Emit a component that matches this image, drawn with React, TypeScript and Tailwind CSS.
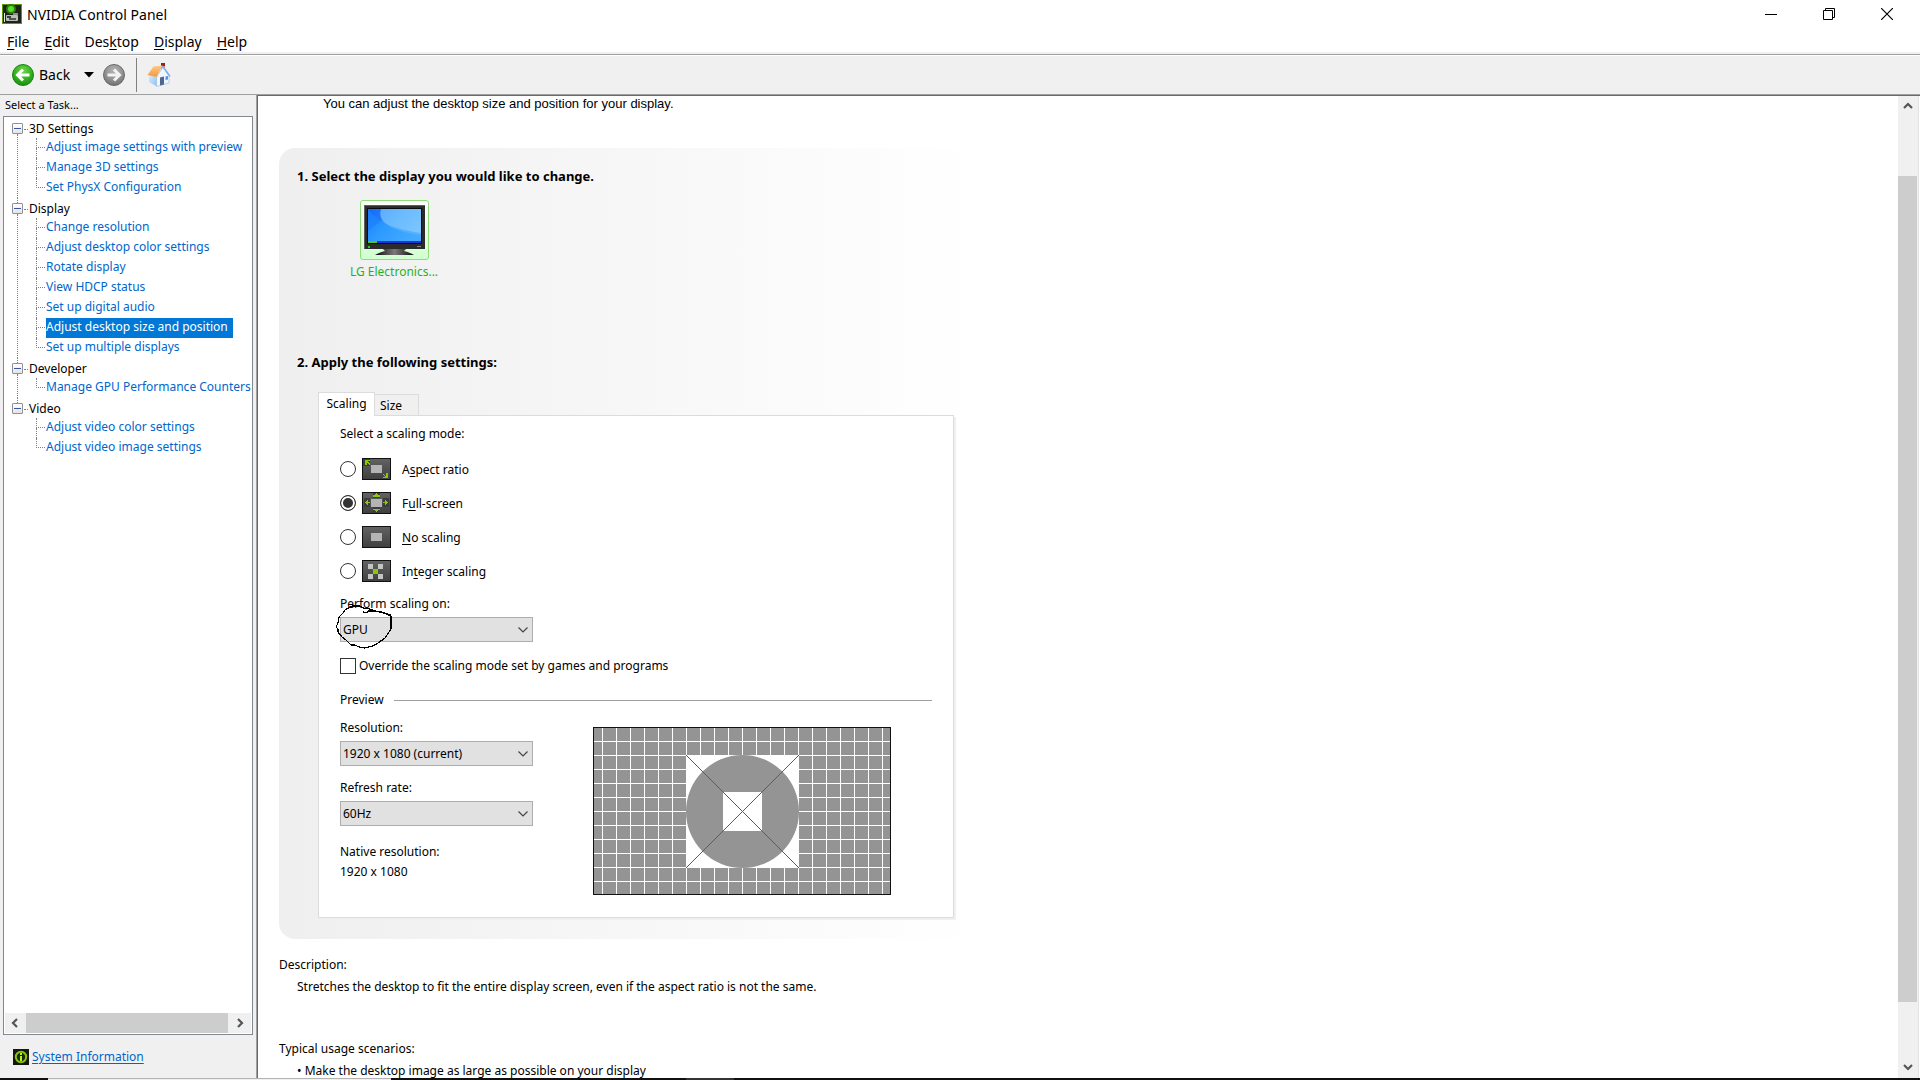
import type { ReactNode } from "react";
import clsx from "clsx";

const menus = [
  { pre: "", key: "F", post: "ile" },
  { pre: "", key: "E", post: "dit" },
  { pre: "Des", key: "k", post: "top" },
  { pre: "", key: "D", post: "isplay" },
  { pre: "", key: "H", post: "elp" },
];

const tree = [
  {
    label: "3D Settings",
    items: ["Adjust image settings with preview", "Manage 3D settings", "Set PhysX Configuration"],
  },
  {
    label: "Display",
    items: [
      "Change resolution",
      "Adjust desktop color settings",
      "Rotate display",
      "View HDCP status",
      "Set up digital audio",
      "Adjust desktop size and position",
      "Set up multiple displays",
    ],
  },
  { label: "Developer", items: ["Manage GPU Performance Counters"] },
  { label: "Video", items: ["Adjust video color settings", "Adjust video image settings"] },
];

const ACTIVE_TASK = "Adjust desktop size and position";

/* ---------- icons ---------- */

const AppIcon = () => (
  <svg width="20" height="20" viewBox="0 0 20 20" aria-hidden="true">
    <rect width="20" height="20" fill="#5f9a00" />
    <rect x="1" y="1" width="18" height="18" fill="#1d2416" />
    <circle cx="9" cy="5" r="5" fill="#2f7a12" />
    <circle cx="9" cy="5" r="3" fill="#55e02a" />
    <rect x="2" y="9" width="1" height="9" fill="#e4e6e4" />
    <rect x="4" y="11" width="12" height="6" rx="1" fill="#b9bdb9" />
    <rect x="5" y="12" width="4" height="2" fill="#3a3f38" />
    <rect x="7" y="14" width="7" height="2" fill="#555" />
    <rect x="11" y="9" width="5" height="2" fill="#8d918d" />
  </svg>
);

const NavArrow = ({ green }: { green?: boolean }) => (
  <svg width="22" height="22" viewBox="0 0 22 22" aria-hidden="true">
    <defs>
      <radialGradient id="navGreen" cx="0.5" cy="0.3" r="0.75">
        <stop offset="0" stopColor="#6fd84a" />
        <stop offset="0.6" stopColor="#2fae1c" />
        <stop offset="1" stopColor="#158a0c" />
      </radialGradient>
      <radialGradient id="navGray" cx="0.5" cy="0.3" r="0.75">
        <stop offset="0" stopColor="#b5b5b5" />
        <stop offset="0.6" stopColor="#8e8e8e" />
        <stop offset="1" stopColor="#6c6c6c" />
      </radialGradient>
    </defs>
    <circle
      cx="11"
      cy="11"
      r="10.5"
      fill={green ? "url(#navGreen)" : "url(#navGray)"}
      stroke={green ? "#1b8512" : "#6a6a6a"}
    />
    <path
      d={green ? "M17.5 11H6M11 5.5L5.5 11l5.5 5.5" : "M4.5 11H16M11 5.5l5.5 5.5-5.5 5.5"}
      fill="none"
      stroke={green ? "#fff" : "#f2f2f2"}
      strokeWidth="3"
    />
  </svg>
);

const HomeIcon = () => (
  <svg width="24" height="24" viewBox="0 0 24 24" aria-hidden="true">
    <defs>
      <linearGradient id="homeSide" x1="0" y1="0" x2="1" y2="1">
        <stop offset="0" stopColor="#d8ecff" />
        <stop offset="1" stopColor="#8fbcec" />
      </linearGradient>
      <linearGradient id="homeRoof" x1="0" y1="0" x2="0" y2="1">
        <stop offset="0" stopColor="#ffc888" />
        <stop offset="1" stopColor="#f49a3c" />
      </linearGradient>
    </defs>
    <rect x="14" y="1" width="4" height="7" fill="#d98a74" />
    <rect x="14" y="0" width="4" height="3" fill="#a01c14" />
    <path d="M2 12l8 2v9.500L2 19z" fill="url(#homeSide)" />
    <path d="M9.500 14L16 4l6 8.500v7.500l-12.500 3.500z" fill="#eef6ff" stroke="#9dbfe4" strokeWidth="0.7" />
    <path d="M.5 12L6.500 3.500 15.500 2.500 9.500 14z" fill="url(#homeRoof)" />
    <path d="M15.500 3l7.500 10.500" stroke="#7fb0e4" strokeWidth="1.600" />
    <path d="M13 14.500l4-1v8l-4 1z" fill="#4f6690" />
    <path d="M18.500 13.500l2.500-.6v3.600l-2.500.6z" fill="#5f8fe0" />
  </svg>
);

const Chevron = ({ d }: { d: string }) => (
  <svg width="10" height="10" viewBox="0 0 10 10" aria-hidden="true">
    <path d={d} fill="none" stroke="#555" strokeWidth="2.200" />
  </svg>
);

const InfoIcon = () => (
  <svg width="16" height="16" viewBox="0 0 16 16" aria-hidden="true">
    <rect width="16" height="16" fill="#14180f" />
    <circle cx="8" cy="8" r="5.200" fill="#1c2a08" stroke="#86c40c" strokeWidth="2" />
    <rect x="7" y="4" width="2" height="2" fill="#b6f02c" />
    <rect x="7" y="7" width="2" height="5" fill="#b6f02c" />
  </svg>
);

const MonitorIcon = () => (
  <svg width="61" height="51" viewBox="0 0 61 51" aria-hidden="true">
    <defs>
      <linearGradient id="screen" x1="0" y1="0" x2="1" y2="0.6">
        <stop offset="0" stopColor="#1672ff" />
        <stop offset="0.5" stopColor="#3aa0ff" />
        <stop offset="1" stopColor="#5cb8ff" />
      </linearGradient>
      <linearGradient id="stand" x1="0" y1="0" x2="1" y2="0">
        <stop offset="0" stopColor="#0a0a0a" />
        <stop offset="0.5" stopColor="#7a7a7a" />
        <stop offset="1" stopColor="#0a0a0a" />
      </linearGradient>
    </defs>
    <rect width="61" height="44" fill="#2b2b2b" />
    <path d="M0 0h61v1H1v43H0z" fill="#5e5e5e" />
    <rect x="3" y="3" width="55" height="36" fill="#0c0c0c" />
    <rect x="4" y="4" width="53" height="34" fill="url(#screen)" />
    <path d="M4 4h13c-1 4-1 8 1 11L4 26z" fill="#1560f5" opacity="0.4" />
    <path d="M17 4c-4 12 8 22 40 26V4z" fill="#9ad3ff" opacity="0.5" />
    <path d="M4 4c8 12 24 20 53 24v8H4z" fill="#1e96ff" opacity="0.4" />
    <rect x="4" y="36" width="53" height="2" fill="#1d35d8" />
    <rect x="4" y="36" width="9" height="2" fill="#57c51f" />
    <rect x="4" y="41" width="2" height="2" fill="#23d02a" />
    <rect x="53" y="41" width="4" height="1" fill="#888" />
    <path d="M19 44h23l-2 2c4 1 7 2 10 4H11c3-2 6-3 10-4z" fill="url(#stand)" />
  </svg>
);

const ModeIcon = ({ children }: { children?: ReactNode }) => (
  <svg width="29" height="22" viewBox="0 0 29 22" shapeRendering="crispEdges" aria-hidden="true">
    <defs>
      <linearGradient id="modeBg" x1="0" y1="0" x2="0" y2="1">
        <stop offset="0" stopColor="#626262" />
        <stop offset="1" stopColor="#404040" />
      </linearGradient>
    </defs>
    <rect width="29" height="22" fill="#111" />
    <rect x="1" y="1" width="27" height="20" fill="url(#modeBg)" />
    {children}
  </svg>
);

const modes = [
  {
    id: "aspect",
    pre: "A",
    key: "s",
    post: "pect ratio",
    art: (
      <>
        <rect x="9" y="7" width="11" height="8" fill="#b4b4b4" />
        <rect x="1" y="1" width="7" height="7" fill="#3c3c3c" />
        <path d="M3 2h5v1H6v1h1v1h1v2H7V6H6V5H5v2H3z" fill="#86cc00" />
        <path d="M26 20h-5v-1h2v-1h-1v-1h-1v-1h1v1h1v1h1v-3h2z" fill="#86cc00" />
      </>
    ),
  },
  {
    id: "full",
    pre: "F",
    key: "u",
    post: "ll-screen",
    art: (
      <>
        <path d="M11 1h7v5h-7zM11 15h7v6h-7zM2 6h6v9H2zM21 6h6v9h-6z" fill="#3c3c3c" />
        <rect x="9" y="7" width="11" height="8" fill="#b4b4b4" />
        <path d="M14 1h1v1h1v1h2v2h-7V3h2V2h1z" fill="#86cc00" />
        <path d="M11 17h7v1h-2v1h-1v1h-1v-1h-1v-1h-2z" fill="#86cc00" />
        <path d="M3 10h1V9h1V8h1v2h2v1H6v2H5v-1H4v-1H3z" fill="#86cc00" />
        <path d="M26 10h-1V9h-1V8h-1v2h-2v1h2v2h1v-1h1v-1h1z" fill="#86cc00" />
      </>
    ),
  },
  {
    id: "none",
    pre: "",
    key: "N",
    post: "o scaling",
    art: <rect x="9" y="7" width="11" height="8" fill="#b4b4b4" />,
  },
  {
    id: "integer",
    pre: "In",
    key: "t",
    post: "eger scaling",
    art: (
      <>
        <path d="M6 4h5v5H6zM16 4h5v5h-5zM6 14h5v5H6zM16 14h5v5h-5z" fill="#c4c4c4" />
        <rect x="11" y="9" width="5" height="5" fill="#86cc00" />
      </>
    ),
  },
];

/* Vertical grid lines start 9px in, horizontal ones 14px in, both 14px apart */
const TestPattern = () => (
  <svg width="298" height="168" viewBox="0 0 298 168" shapeRendering="crispEdges" role="img" aria-label="Preview">
    <rect width="298" height="168" fill="#111" />
    <rect x="1" y="1" width="296" height="166" fill="#949494" />
    {Array.from({ length: 21 }, (_, i) => (
      <rect key={i} x={9 + i * 14} y="1" width="1" height="166" fill="#fff" />
    ))}
    {Array.from({ length: 11 }, (_, i) => (
      <rect key={i} x="1" y={14 + i * 14} width="296" height="1" fill="#fff" />
    ))}
    <rect x="93" y="28" width="113" height="113" fill="#fff" />
    <circle cx="149.500" cy="84.500" r="56.500" fill="#949494" shapeRendering="auto" />
    <rect x="130" y="65" width="39" height="39" fill="#fff" />
    <path d="M93 28l113 113M206 28L93 141" stroke="#5c5c5c" shapeRendering="auto" />
  </svg>
);

/* ---------- controls ---------- */

interface SelectBoxProps {
  id: string;
  value: string;
  children?: ReactNode;
}

const SelectBox = ({ id, value, children }: SelectBoxProps) => (
  <div className="relative mt-[3px] w-[193px]">
    <select
      id={id}
      className="block h-[25px] w-full appearance-none border border-[#adadad] bg-[#e1e1e1] pl-[2px] pr-6 outline-none"
    >
      <option>{value}</option>
    </select>
    <svg className="pointer-events-none absolute right-[5px] top-[10px]" width="10" height="6" viewBox="0 0 10 6">
      <path d="M.5.5L5 5 9.500.5" fill="none" stroke="#444" strokeWidth="1.200" />
    </svg>
    {children}
  </div>
);

const TaskTree = () => (
  <ul className="pl-2 pt-px">
    {tree.map((group, g) => {
      const lastGroup = g === tree.length - 1;
      return (
        <li key={group.label} className="flex">
          <div className="flex w-[11px] flex-col items-center">
            <span className={clsx("h-[5px] w-px", g > 0 && "border-l border-dotted border-[#808080]")} />
            <button
              aria-label={`Collapse ${group.label}`}
              className="flex size-[11px] shrink-0 items-center justify-center rounded-[1px] border border-[#919191] bg-gradient-to-b from-white to-[#e4e4e4]"
            >
              <span className="h-px w-[7px] bg-[#3b56a8]" />
            </button>
            {!lastGroup && <span className="w-px flex-1 border-l border-dotted border-[#808080]" />}
          </div>
          <div>
            <div className="flex h-5 items-center pt-[2px]">
              <span className="ml-px mr-px w-1 border-t border-dotted border-[#808080]" />
              {group.label}
            </div>
            <ul className="ml-[13px]">
              {group.items.map((item, i) => (
                <li key={item} className="flex h-5">
                  <span className="mr-px flex w-[9px] flex-col">
                    <span className="h-[10px] border-b border-l border-dotted border-[#808080]" />
                    {i < group.items.length - 1 && (
                      <span className="h-[10px] border-l border-dotted border-[#808080]" />
                    )}
                  </span>
                  <a
                    href="#"
                    className={clsx(
                      "whitespace-nowrap pr-[5px] leading-[18px]",
                      item === ACTIVE_TASK ? "bg-[#0078d7] text-white" : "text-[#0066cc]"
                    )}
                  >
                    {item}
                  </a>
                </li>
              ))}
            </ul>
          </div>
        </li>
      );
    })}
  </ul>
);

/* ---------- page sections ---------- */

const TitleBar = () => (
  <header className="bg-white text-[14px]">
    <div className="flex h-7 items-center pl-[2px] pr-1">
      <AppIcon />
      <span className="ml-[5px] pt-px">NVIDIA Control Panel</span>
      <div className="ml-auto flex">
        <button aria-label="Minimize" className="flex h-7 w-[58px] items-center justify-center">
          <span className="h-px w-3 bg-black" />
        </button>
        <button aria-label="Restore" className="flex h-7 w-[58px] items-center justify-center">
          <svg width="12" height="12" viewBox="0 0 12 12" fill="none" stroke="#000">
            <path d="M.5 2.500h9v9h-9zM2.500 2V.5h9v9H10" />
          </svg>
        </button>
        <button aria-label="Close" className="flex h-7 w-[58px] items-center justify-center">
          <svg width="12" height="12" viewBox="0 0 12 12" stroke="#000" strokeWidth="1.200">
            <path d="M0 0l12 12M12 0L0 12" />
          </svg>
        </button>
      </div>
    </div>
    <nav className="flex h-6 items-center gap-[15px] pl-[7px] pt-1">
      {menus.map((m) => (
        <button key={m.key + m.post} className="leading-5">
          {m.pre}
          <span className="underline underline-offset-2">{m.key}</span>
          {m.post}
        </button>
      ))}
    </nav>
    <div className="h-1 border-b border-white bg-[#a0a0a0]">
      <div className="h-[2px] bg-[#f0f0f0]" />
    </div>
  </header>
);

const Toolbar = () => (
  <div className="flex h-[39px] shrink-0 items-center border-b border-[#a0a0a0] pl-3 text-[14px]">
    <button className="flex items-center gap-[5px]">
      <NavArrow green />
      Back
    </button>
    <button aria-label="Recent pages" className="ml-[14px]">
      <svg width="10" height="6" viewBox="0 0 10 6">
        <path d="M0 0h10L5 5.500z" />
      </svg>
    </button>
    <button aria-label="Forward" className="ml-[9px]">
      <NavArrow />
    </button>
    <span className="ml-[11px] h-[34px] w-px bg-[#808080]" />
    <button aria-label="Home" className="ml-[10px]">
      <HomeIcon />
    </button>
  </div>
);

const Sidebar = () => (
  <aside className="flex w-[257px] shrink-0 flex-col border-r border-[#a0a0a0] pl-[3px] pr-[3px]">
    <p className="mb-px pl-[2px] text-[11px] leading-5">Select a Task...</p>
    <div className="flex min-h-0 flex-1 flex-col overflow-hidden border border-[#828790] bg-white">
      <div className="min-h-0 flex-1 overflow-hidden">
        <TaskTree />
      </div>
      <div className="m-px flex h-5 shrink-0 bg-[#f0f0f0]">
        <button aria-label="Scroll left" className="flex w-[21px] items-center justify-center pr-[2px]">
          <Chevron d="M7 1L3 5l4 4" />
        </button>
        <div className="flex-1 bg-[#cdcdcd]" />
        <button aria-label="Scroll right" className="flex w-[23px] items-center justify-center">
          <Chevron d="M3 1l4 4-4 4" />
        </button>
      </div>
    </div>
    <div className="flex h-[43px] shrink-0 items-center gap-[3px] pl-[10px] pt-px">
      <InfoIcon />
      <a href="#" className="text-[#0066cc] underline underline-offset-2">
        System Information
      </a>
    </div>
  </aside>
);

const ScalingTab = () => (
  <div className="border border-[#dcdcdc] bg-white px-[21px] pb-[22px] pt-2 shadow-[2px_2px_0_#f0f0f0]">
    <fieldset>
      <legend className="mb-2">Select a scaling mode:</legend>
      {modes.map((m) => (
        <label key={m.id} className="flex h-[34px] items-center">
          <input
            type="radio"
            name="scaling-mode"
            defaultChecked={m.id === "full"}
            className="size-4 appearance-none rounded-full border border-[#333] bg-white checked:bg-[#333] checked:shadow-[inset_0_0_0_2px_#fff]"
          />
          <span className="ml-[6px] mr-[11px]">
            <ModeIcon>{m.art}</ModeIcon>
          </span>
          <span className="pt-[2px]">
            {m.pre}
            <span className="underline underline-offset-2">{m.key}</span>
            {m.post}
          </span>
        </label>
      ))}
    </fieldset>

    <label htmlFor="scale-on" className="mt-[6px] block">
      Perform scaling on:
    </label>
    <SelectBox id="scale-on" value="GPU">
      {/* Hand-drawn ring around the current value */}
      <svg
        className="pointer-events-none absolute -left-[5px] -top-[14px]"
        width="60"
        height="48"
        viewBox="0 0 60 48"
        fill="none"
        stroke="#000"
        strokeWidth="1.200"
        shapeRendering="crispEdges"
      >
        <path d="M28 9L32 10L33 8L38 8L47 9L56 13L56 26L54 29L50 35L43 40L38 43L30 45L24 44L20 42L16 42L11 37L7 34L3 29L3 26L1 24L3 20L4 14L8 10L10 7L17 3L25 3L28 5L35 6L40 8L45 9L56 12" />
      </svg>
    </SelectBox>

    <label className="mt-[14px] flex items-center gap-[3px]">
      <input
        type="checkbox"
        className="size-4 appearance-none border border-[#333] bg-white checked:bg-[#333]"
      />
      Override the scaling mode set by games and programs
    </label>

    <div className="mt-[14px] flex items-center gap-[10px]">
      Preview
      <span className="h-px flex-1 bg-[#a0a0a0]" />
    </div>
    <div className="mt-2 flex gap-[60px]">
      <div>
        <label htmlFor="resolution" className="block">
          Resolution:
        </label>
        <SelectBox id="resolution" value="1920 x 1080 (current)" />
        <label htmlFor="refresh" className="mt-3 block">
          Refresh rate:
        </label>
        <SelectBox id="refresh" value="60Hz" />
        <p className="mt-4">Native resolution:</p>
        <p>1920 x 1080</p>
      </div>
      <div className="pt-[9px]">
        <TestPattern />
      </div>
    </div>
  </div>
);

const Content = () => (
  <main className="min-w-0 flex-1 overflow-hidden bg-white pl-[21px]">
    <p className="pl-11 font-['Liberation_Sans',sans-serif] text-[13px] leading-4">
      You can adjust the desktop size and position for your display.
    </p>

    <div className="mt-9 max-w-[697px] rounded-2xl bg-gradient-to-r from-[#efefef] to-white pb-[21px] pl-[18px] pr-[22px] pt-[18px]">
      <h2 className="text-[13px] font-bold leading-5">1. Select the display you would like to change.</h2>
      <div className="ml-[47px] mt-[14px] flex w-[100px] flex-col items-center gap-[2px]">
        <button
          aria-label="LG Electronics"
          className="flex h-[60px] w-[69px] items-center justify-center rounded-[3px] border border-[#8fdc78] bg-gradient-to-b from-white to-[#d0ffd0]"
        >
          <MonitorIcon />
        </button>
        <span className="text-[#1eb41e]">LG Electronics...</span>
      </div>

      <h2 className="mt-[70px] text-[13px] font-bold leading-5">2. Apply the following settings:</h2>
      <div className="ml-[21px] mt-5">
        <div role="tablist" className="-mb-px flex items-end">
          <button
            role="tab"
            aria-selected="true"
            className="relative h-6 w-[57px] border border-b-0 border-[#dcdcdc] bg-white pb-[2px]"
          >
            Scaling
          </button>
          <button
            role="tab"
            aria-selected="false"
            className="h-[22px] w-11 border border-l-0 border-[#dcdcdc] bg-[#f0f0f0] pl-[5px] pt-px text-left"
          >
            Size
          </button>
        </div>
        <ScalingTab />
      </div>
    </div>

    <p className="mt-4">Description:</p>
    <p className="mt-[2px] pl-[18px]">
      Stretches the desktop to fit the entire display screen, even if the aspect ratio is not the same.
    </p>
    <p className="mt-[42px]">Typical usage scenarios:</p>
    <ul className="mt-[2px] pl-[18px]">
      <li>• Make the desktop image as large as possible on your display</li>
    </ul>
  </main>
);

const VerticalScrollbar = () => (
  <div className="flex w-[22px] shrink-0 flex-col border-r border-white bg-[#f0f0f0]">
    <div className="flex flex-1 flex-col border-r border-[#e3e3e3] pr-px">
      <button aria-label="Scroll up" className="flex h-5 items-center justify-center">
        <Chevron d="M1 7l4-4 4 4" />
      </button>
      <div className="h-[60px]" />
      <div className="flex-1 bg-[#cdcdcd]" />
      <div className="h-[54px]" />
      <button aria-label="Scroll down" className="flex h-[22px] items-center justify-center">
        <Chevron d="M1 3l4 4 4-4" />
      </button>
    </div>
  </div>
);

export default function App() {
  return (
    <div className="flex h-screen flex-col overflow-hidden bg-[#f0f0f0] font-['Noto_Sans','Open_Sans',sans-serif] text-[12px] leading-5 text-black">
      <TitleBar />
      <Toolbar />
      <div className="flex min-h-0 flex-1">
        <Sidebar />
        <div className="flex min-w-0 flex-1 border-l border-t border-[#696969]">
          <Content />
          <VerticalScrollbar />
        </div>
      </div>
      {/* Edge of the auto-hidden taskbar */}
      <div className="flex h-[2px] shrink-0 bg-[#101010]">
        <span className="ml-12 w-[343px] border-t border-[#b4b4b4] bg-[#f0f0f0]" />
        <span className="ml-[295px] w-12 bg-[#333]" />
      </div>
    </div>
  );
}
